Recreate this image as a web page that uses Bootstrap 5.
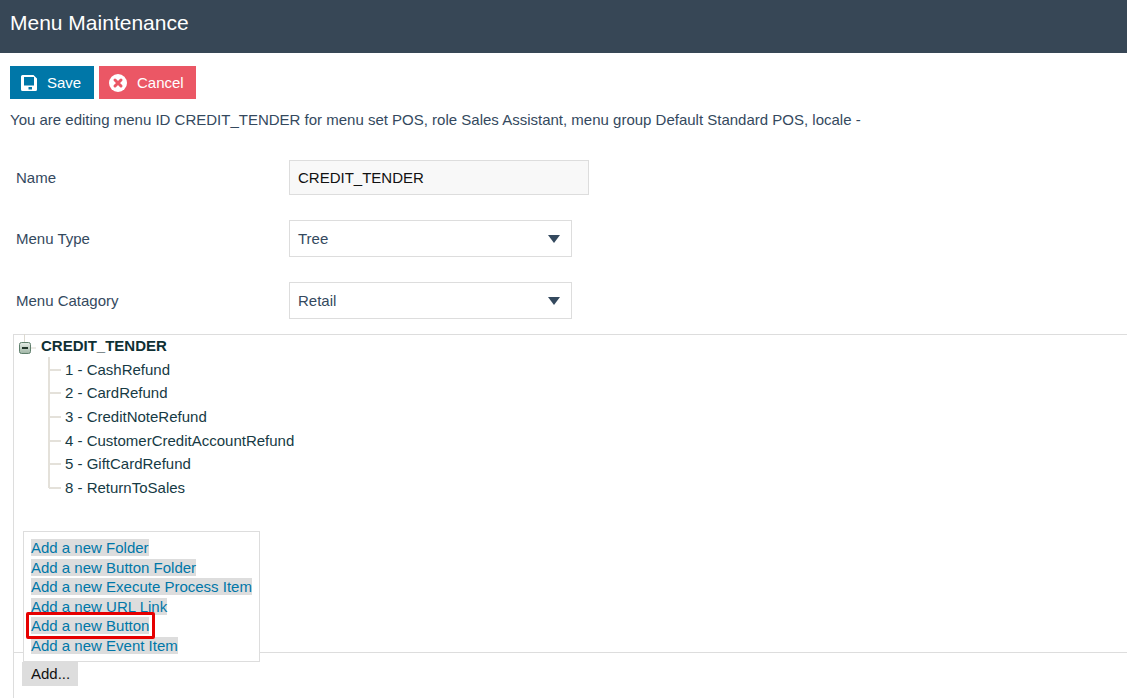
<!DOCTYPE html>
<html>

<head>
    <title>Menu Maintenance</title>
    <link rel="stylesheet" href="https://cdn.jsdelivr.net/npm/bootstrap@5.3.0/dist/css/bootstrap.min.css">
    <style>
        body { font-family: "Liberation Sans", Arial, sans-serif; font-size: 15px; color: #34495e; background: #fff; overflow: hidden; height: 698px; }
        .page-head { background: #374756; height: 53px; color: #fff; font-size: 21px; padding: 10px 10px 0; line-height: 26px; }
        .action-bar { padding: 13px 10px 0; gap: 5px; }
        .act-btn { height: 33px; border: 0; border-radius: 0; color: #fff; font-size: 15px; padding: 0; display: flex; align-items: center; }
        .act-btn span { padding-top: 2px; }
        .act-save { background: #0077a8; width: 84px; padding-left: 11px; gap: 10px; }
        .act-cancel { background: #eb5765; width: 97px; padding-left: 10px; gap: 10px; }
        .act-btn:hover { color: #fff; }
        .act-save:hover { background: #0077a8; }
        .act-cancel:hover { background: #eb5765; }
        .edit-note { margin: 12px 0 0 10px; line-height: 18px; height: 18px; white-space: nowrap; }
        .field-row { display: flex; align-items: center; margin-top: 25px; }
        .field-first { margin-top: 31px; }
        .field-label { width: 289px; padding: 2px 0 0 16px; }
        .name-box { width: 300px; height: 35px; border: 1px solid #ddd; background: #f8f8f8; color: #111; padding-left: 8px; line-height: 33px; }
        .pick-box { width: 283px; height: 37px; border: 1px solid #ddd; padding: 0 11px 0 8px; display: flex; align-items: center; justify-content: space-between; }
        .pick-text { padding-top: 2px; }
        .pick-arrow { width: 0; height: 0; border-left: 6px solid transparent; border-right: 6px solid transparent; border-top: 8px solid #34495e; }
        .tree-panel { position: relative; margin: 15px 0 0 13px; border-left: 1px solid #ddd; border-top: 1px solid #ddd; height: 364px; }
        .tree-root { position: relative; margin: 2px 0 0 27px; line-height: 18px; font-weight: 700; color: #0f3034; }
        .tree-toggle { position: absolute; left: -22px; top: -3px; }
        .tree-items { position: relative; list-style: none; margin: 2.500px 0 0 0; padding: 0 0 0 51px; color: #163a44; }
        .tree-items li { height: 23.7px; line-height: 23.7px; position: relative; white-space: nowrap; }
        .tree-items li::before { content: ""; position: absolute; left: -16px; top: 11px; width: 12px; height: 2px; background: #e4e1da; }
        .tree-spine { position: absolute; left: 34px; top: 22px; width: 2px; height: 131px; background: #e4e1da; }
        .tree-rule { position: absolute; left: 0; right: 0; top: 317px; height: 1px; background: #ddd; }
        .add-menu { position: absolute; left: 9px; top: 196px; width: 237px; height: 131px; background: #fff; border: 1px solid #ddd; padding: 6px 7px; line-height: 19.5px; z-index: 1; }
        .add-menu a { display: block; white-space: nowrap; color: #0077a8; text-decoration: none; }
        .add-menu a span { background: #ddd; }
        .add-pick { position: absolute; left: 2px; top: 80px; width: 129px; height: 27px; border: 3px solid #e60000; border-radius: 2px; }
        .add-trigger { position: absolute; left: 8px; top: 327px; width: 56px; height: 24px; background: #ddd; color: #111; line-height: 24px; padding-left: 9px; z-index: 1; }
    </style>
</head>

<body>
    <div class="page-head">Menu Maintenance</div>

    <div class="d-flex action-bar">
        <button class="btn act-btn act-save">
            <svg width="16" height="16" viewBox="0 0 16 16">
                <path fill="#fff" fill-rule="evenodd" d="M1.500 0H12.500L16 3.500V14.500A1.500 1.500 0 0 1 14.500 16H1.500A1.500 1.500 0 0 1 0 14.500V1.500A1.500 1.500 0 0 1 1.500 0zM3 2V10.500H13V2zM7.500 12V14.500H11V12z"/>
            </svg>
            <span>Save</span>
        </button>
        <button class="btn act-btn act-cancel">
            <svg width="18" height="18" viewBox="0 0 18 18">
                <circle cx="9" cy="9" r="9" fill="#fff"/>
                <path d="M6 6l6 6M12 6l-6 6" stroke="#eb5765" stroke-width="3" stroke-linecap="round"/>
            </svg>
            <span>Cancel</span>
        </button>
    </div>

    <div class="edit-note">You are editing menu ID CREDIT_TENDER for menu set POS, role Sales Assistant, menu group Default Standard POS, locale -</div>

    <div class="field-row field-first">
        <div class="field-label">Name</div>
        <div class="name-box">CREDIT_TENDER</div>
    </div>
    <div class="field-row">
        <div class="field-label">Menu Type</div>
        <div class="pick-box"><span class="pick-text">Tree</span><span class="pick-arrow"></span></div>
    </div>
    <div class="field-row">
        <div class="field-label">Menu Catagory</div>
        <div class="pick-box"><span class="pick-text">Retail</span><span class="pick-arrow"></span></div>
    </div>

    <div class="tree-panel">
        <div class="tree-root">
            <svg class="tree-toggle" width="18" height="21" viewBox="0 0 18 21">
                <path d="M5.500 0V9M12 14H17" stroke="#dcd9d0"/>
                <defs>
                    <linearGradient id="toggleFill" x1="0" y1="0" x2="0" y2="1">
                        <stop offset="0" stop-color="#e6ece6"/>
                        <stop offset="1" stop-color="#9fb5a5"/>
                    </linearGradient>
                </defs>
                <rect x="0.500" y="8.500" width="11" height="11" rx="2" fill="url(#toggleFill)" stroke="#5f7f6c"/>
                <rect x="3" y="13" width="6" height="2" fill="#22352a"/>
            </svg>
            CREDIT_TENDER
        </div>
        <span class="tree-spine"></span>
        <ul class="tree-items">
            <li>1 - CashRefund</li>
            <li>2 - CardRefund</li>
            <li>3 - CreditNoteRefund</li>
            <li>4 - CustomerCreditAccountRefund</li>
            <li>5 - GiftCardRefund</li>
            <li>8 - ReturnToSales</li>
        </ul>
        <div class="tree-rule"></div>
        <div class="add-menu">
            <a href="#"><span>Add a new Folder</span></a>
            <a href="#"><span>Add a new Button Folder</span></a>
            <a href="#"><span>Add a new Execute Process Item</span></a>
            <a href="#"><span>Add a new URL Link</span></a>
            <a href="#"><span>Add a new Button</span></a>
            <a href="#"><span>Add a new Event Item</span></a>
            <div class="add-pick"></div>
        </div>
        <div class="add-trigger">Add...</div>
    </div>

    <script src="https://cdn.jsdelivr.net/npm/bootstrap@5.3.0/dist/js/bootstrap.bundle.min.js"></script>
</body>

</html>
